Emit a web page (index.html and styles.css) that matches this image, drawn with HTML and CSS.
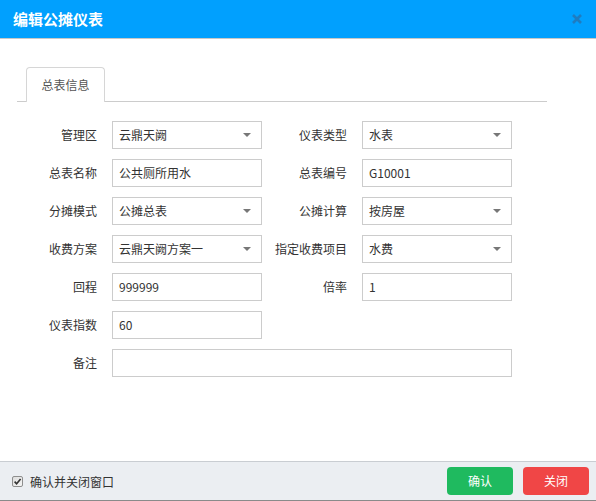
FILE: index.html
```html
<!DOCTYPE html>
<html lang="zh-CN">
<head>
<meta charset="utf-8">
<title>编辑公摊仪表</title>
<link rel="stylesheet" href="styles.css">
</head>
<body>
<div class="dialog">
  <div class="header">
    <span class="title">编辑公摊仪表</span>
    <svg class="close" width="12" height="12" viewBox="0 0 12 12"><path d="M2 2 L10 10 M10 2 L2 10" stroke="#1f7cc0" stroke-width="2.6" stroke-linecap="butt"/></svg>
  </div>
  <div class="content">
    <div class="tabs">
      <div class="tab">总表信息</div>
    </div>
    <div class="form">
      <div class="label">管理区</div>
      <div class="box select"><span>云鼎天阙</span><i class="arrow"></i></div>
      <div class="label">仪表类型</div>
      <div class="box select"><span>水表</span><i class="arrow"></i></div>

      <div class="label">总表名称</div>
      <div class="box"><span>公共厕所用水</span></div>
      <div class="label">总表编号</div>
      <div class="box"><span>G10001</span></div>

      <div class="label">分摊模式</div>
      <div class="box select"><span>公摊总表</span><i class="arrow"></i></div>
      <div class="label">公摊计算</div>
      <div class="box select"><span>按房屋</span><i class="arrow"></i></div>

      <div class="label">收费方案</div>
      <div class="box select"><span>云鼎天阙方案一</span><i class="arrow"></i></div>
      <div class="label">指定收费项目</div>
      <div class="box select"><span>水费</span><i class="arrow"></i></div>

      <div class="label">回程</div>
      <div class="box"><span>999999</span></div>
      <div class="label">倍率</div>
      <div class="box"><span>1</span></div>

      <div class="label">仪表指数</div>
      <div class="box"><span>60</span></div>
      <div class="empty"></div>
      <div class="empty"></div>

      <div class="label">备注</div>
      <div class="box wide"></div>
    </div>
  </div>
  <div class="footer">
    <label class="confirm">
      <svg class="check" width="11" height="11" viewBox="0 0 11 11">
        <defs><linearGradient id="cg" x1="0" y1="0" x2="1" y2="1"><stop offset="0" stop-color="#dcdcdc"/><stop offset="1" stop-color="#f6f6f6"/></linearGradient></defs>
        <rect x="0.5" y="0.5" width="10" height="10" rx="1.5" fill="url(#cg)" stroke="#8e8e8e"/>
        <path d="M2.6 5.6 L4.6 7.8 L8.6 3" fill="none" stroke="#333" stroke-width="1.6"/>
      </svg>
      <span>确认并关闭窗口</span>
    </label>
    <div class="buttons">
      <button class="btn ok">确认</button>
      <button class="btn cancel">关闭</button>
    </div>
  </div>
</div>
</body>
</html>
```
FILE: styles.css
```css
* { box-sizing: border-box; }
html, body { margin: 0; padding: 0; }
body {
  font-family: "Noto Sans CJK SC", "Noto Sans", sans-serif;
  font-size: 12px;
  color: #333;
  background: #fff;
}
.dialog {
  width: 596px;
  height: 501px;
  display: flex;
  flex-direction: column;
  background: #fff;
}
.header {
  height: 39px;
  flex: none;
  background: #01a0fe;
  border-bottom: 1px solid #c8c8c8;
  display: flex;
  align-items: center;
  justify-content: space-between;
  padding: 0 13px 0 13px;
}
.title {
  color: #fff;
  font-size: 15px;
  font-weight: bold;
  line-height: 1;
  margin-top: -2px;
}
.close { display: block; margin-top: -1px; }
.content {
  flex: 1;
  padding: 28px 0 0 0;
}
.tabs {
  margin-left: 17px;
  width: 530px;
  height: 35px;
  border-bottom: 1px solid #cccccc;
  padding-left: 9px;
  display: flex;
  align-items: flex-end;
}
.tab {
  width: 79px;
  height: 35px;
  border: 1px solid #d6d6d6;
  border-bottom: none;
  border-radius: 4px 4px 0 0;
  background: #fff;
  margin-bottom: -1px;
  color: #555;
  font-size: 12px;
  display: flex;
  align-items: center;
  justify-content: center;
  padding-bottom: 1px;
}
.form {
  margin-top: 19px;
  display: grid;
  grid-template-columns: 112px 150px 100px 150px;
  grid-auto-rows: 28px;
  row-gap: 10px;
}
.label {
  text-align: right;
  padding-right: 15px;
  display: flex;
  align-items: center;
  justify-content: flex-end;
  color: #333;
  padding-bottom: 2px;
}
.box {
  border: 1px solid #cccccc;
  background: #fff;
  display: flex;
  align-items: center;
  justify-content: space-between;
  padding: 0 10px 1px 6px;
  color: #333;
}
.box.wide { grid-column: 2 / 5; }
.arrow {
  width: 0;
  height: 0;
  border-left: 4px solid transparent;
  border-right: 4px solid transparent;
  border-top: 4px solid #777;
  margin-top: 1px;
}
.footer {
  height: 40px;
  flex: none;
  background: #ebeef2;
  border-top: 1px solid #c9cdd2;
  border-bottom: 1px solid #8a8a8a;
  display: flex;
  align-items: center;
  justify-content: space-between;
  padding: 0 7px 0 12px;
}
.confirm {
  display: flex;
  align-items: center;
  gap: 7px;
  color: #333;
  font-size: 12px;
}
.check { display: block; }
.buttons { display: flex; gap: 10px; }
.btn {
  width: 66px;
  height: 28px;
  border: none;
  border-radius: 4px;
  color: #fff;
  font-family: "Noto Sans CJK SC", "Noto Sans", sans-serif;
  font-size: 12px;
  padding: 0 0 2px 0;
  cursor: pointer;
}
.btn.ok { background: #1fba5f; }
.btn.cancel { background: #f04646; }
```
